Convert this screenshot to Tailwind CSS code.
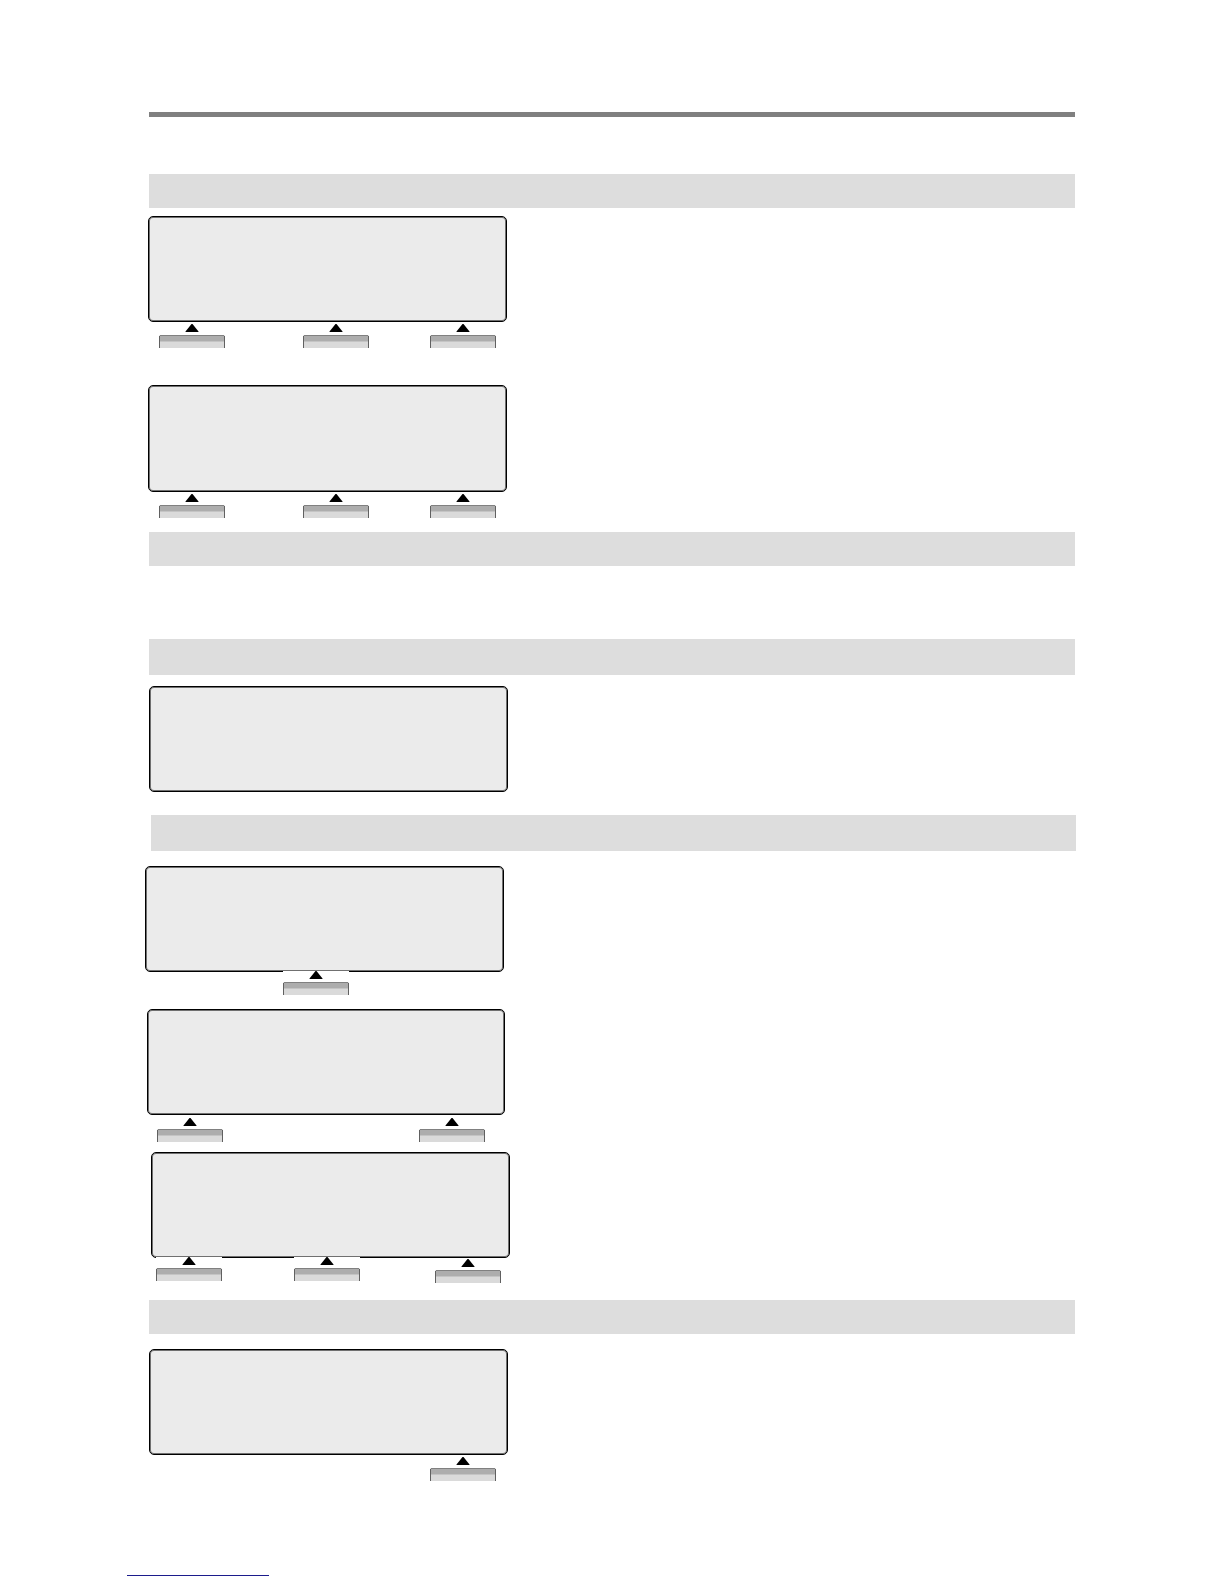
<!DOCTYPE html>
<html lang="en">
<head>
<meta charset="utf-8">
<meta name="viewport" content="width=device-width, initial-scale=1">
<title>Phone displays and soft keys</title>
<script src="https://cdn.jsdelivr.net/npm/@tailwindcss/browser@4"></script>
</head>
<body class="bg-white">
<!-- Soft key: pointer and the upper part of a key cap -->
<svg class="hidden">
  <symbol id="key" viewBox="0 0 66 24">
    <path d="M32.500 0h1L39.500 7.500V8h-13v-.5z" fill="#000"/>
    <path d="M0 24V12q0-1 1-1h64q1 0 1 1v12z" fill="#dadada"/>
    <path d="M1 12h64v5H1z" fill="#adadad"/>
    <path d="M1 17h64v1H1z" fill="#c4c4c4"/>
    <path d="M.5 24V12M65.500 24V12" stroke="#606060"/>
    <path d="M1 11.500h64" stroke="#808080"/>
  </symbol>
</svg>

<main class="px-[149px] pt-28">
  <hr class="h-[5px] border-0 bg-[#808080]">

  <section class="mt-[57px]">
    <div class="h-[34px] bg-[#dddddd]"></div>
    <figure class="mt-2 -ml-px w-[359px]">
      <div class="h-[106px] rounded-[5px] border border-black bg-[#ebebeb] inset-ring inset-ring-[#707070]"></div>
      <div class="mt-0.5 flex items-start pl-[11px]">
        <button type="button" aria-label="Left soft key" class="h-6 w-[66px] bg-white"><svg class="h-6 w-[66px]"><use href="#key"/></svg></button>
        <button type="button" aria-label="Middle soft key" class="ml-[78px] h-6 w-[66px] bg-white"><svg class="h-6 w-[66px]"><use href="#key"/></svg></button>
        <button type="button" aria-label="Right soft key" class="ml-[61px] h-6 w-[66px] bg-white"><svg class="h-6 w-[66px]"><use href="#key"/></svg></button>
      </div>
    </figure>
    <figure class="mt-[37px] -ml-px w-[359px]">
      <div class="h-[107px] rounded-[5px] border border-black bg-[#ebebeb] inset-ring inset-ring-[#707070]"></div>
      <div class="mt-0.5 flex items-start pl-[11px]">
        <button type="button" aria-label="Left soft key" class="h-6 w-[66px] bg-white"><svg class="h-6 w-[66px]"><use href="#key"/></svg></button>
        <button type="button" aria-label="Middle soft key" class="ml-[78px] h-6 w-[66px] bg-white"><svg class="h-6 w-[66px]"><use href="#key"/></svg></button>
        <button type="button" aria-label="Right soft key" class="ml-[61px] h-6 w-[66px] bg-white"><svg class="h-6 w-[66px]"><use href="#key"/></svg></button>
      </div>
    </figure>
  </section>

  <section class="mt-[14px]">
    <div class="h-[34px] bg-[#dddddd]"></div>
  </section>

  <section class="mt-[73px]">
    <div class="h-9 bg-[#dddddd]"></div>
    <figure class="mt-[11px] w-[359px]">
      <div class="h-[106px] rounded-[5px] border border-black bg-[#ebebeb] inset-ring inset-ring-[#707070]"></div>
    </figure>
  </section>

  <section class="mt-[23px]">
    <div class="-mr-px ml-0.5 h-9 bg-[#dddddd]"></div>
    <figure class="mt-[15px] -ml-1 w-[359px]">
      <div class="h-[106px] rounded-[5px] border border-black bg-[#ebebeb] inset-ring inset-ring-[#707070]"></div>
      <div class="-mt-px flex items-start pl-[138px]">
        <button type="button" aria-label="Middle soft key" class="h-6 w-[66px] bg-white"><svg class="h-6 w-[66px]"><use href="#key"/></svg></button>
      </div>
    </figure>
    <figure class="mt-[14px] -ml-0.5 w-[358px]">
      <div class="h-[106px] rounded-[5px] border border-black bg-[#ebebeb] inset-ring inset-ring-[#707070]"></div>
      <div class="mt-[3px] flex items-start pl-[10px]">
        <button type="button" aria-label="Left soft key" class="h-6 w-[66px] bg-white"><svg class="h-6 w-[66px]"><use href="#key"/></svg></button>
        <button type="button" aria-label="Right soft key" class="ml-[196px] h-6 w-[66px] bg-white"><svg class="h-6 w-[66px]"><use href="#key"/></svg></button>
      </div>
    </figure>
    <figure class="mt-[10px] ml-0.5 w-[359px]">
      <div class="h-[106px] rounded-[5px] border border-black bg-[#ebebeb] inset-ring inset-ring-[#707070]"></div>
      <div class="-mt-px flex items-end pl-[5px]">
        <button type="button" aria-label="Left soft key" class="mb-0.5 h-6 w-[66px] bg-white"><svg class="h-6 w-[66px]"><use href="#key"/></svg></button>
        <button type="button" aria-label="Middle soft key" class="mb-0.5 ml-[72px] h-6 w-[66px] bg-white"><svg class="h-6 w-[66px]"><use href="#key"/></svg></button>
        <button type="button" aria-label="Right soft key" class="ml-[75px] h-6 w-[66px] bg-white"><svg class="h-6 w-[66px]"><use href="#key"/></svg></button>
      </div>
    </figure>
  </section>

  <section class="mt-[17px]">
    <div class="h-[34px] bg-[#dddddd]"></div>
    <figure class="mt-[15px] w-[359px]">
      <div class="h-[106px] rounded-[5px] border border-black bg-[#ebebeb] inset-ring inset-ring-[#707070]"></div>
      <div class="mt-0.5 flex items-start pl-[281px]">
        <button type="button" aria-label="Right soft key" class="h-6 w-[66px] bg-white"><svg class="h-6 w-[66px]"><use href="#key"/></svg></button>
      </div>
    </figure>
  </section>
</main>

<footer class="px-[127px] pt-[78px] pb-2">
  <a href="#" aria-label="Home" class="block h-[17px] w-[142px] border-b border-b-[#1c1c8c]"></a>
</footer>
</body>
</html>
